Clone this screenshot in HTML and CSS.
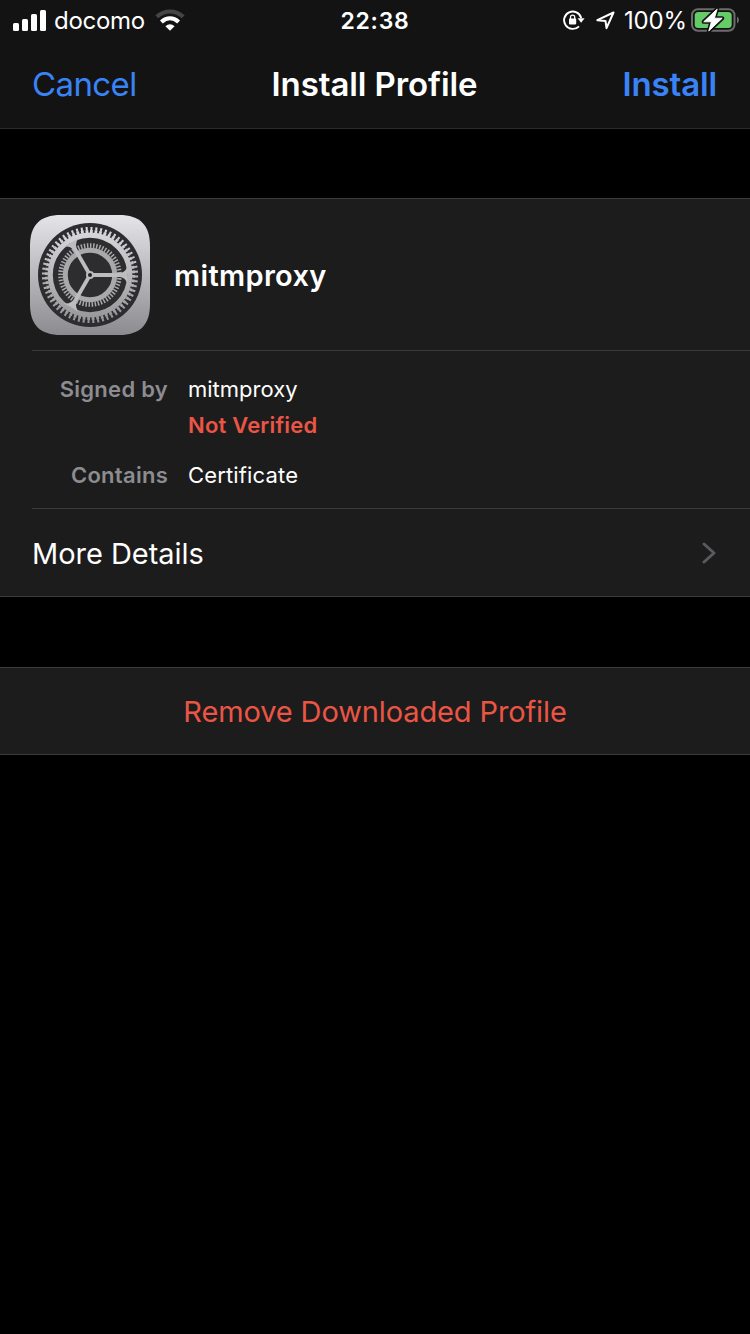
FILE: index.html
```
<!DOCTYPE html>
<html lang="en">
<head>
<meta charset="utf-8">
<title>Install Profile</title>
<link rel="stylesheet" href="styles.css">
</head>
<body>
<header class="top">
  <div class="status">
    <div class="status-left">
      <svg class="signal" width="33" height="21" viewBox="0 0 33 21" fill="#fff"><rect x="0" y="13" width="6" height="8" rx="1.5"/><rect x="9" y="9" width="6" height="12" rx="1.5"/><rect x="18" y="4" width="6" height="17" rx="1.5"/><rect x="27" y="0" width="6" height="21" rx="1.5"/></svg>
      <span class="carrier">docomo</span>
      <svg class="wifi" width="30" height="22" viewBox="0 0 30 22" fill="none"><path d="M1.8 7.8C9.5.7 20.5.7 28.2 7.8" stroke="#454545" stroke-width="4.2"/><path d="M6.4 13C11.7 8.2 18.3 8.2 23.6 13" stroke="#fff" stroke-width="4.2"/><path d="M10.4 17.2Q15 13.2 19.6 17.2L15 21.8Z" fill="#fff"/></svg>
    </div>
    <span class="clock">22:38</span>
    <div class="status-right">
      <svg class="lock" width="22" height="20" viewBox="0 0 22 20" fill="none"><path d="M16 16.3A8.7 8.7 0 1 1 18.2 8" stroke="#fff" stroke-width="1.9"/><path d="M14.6 8.3H21.6L18.1 12.8Z" fill="#fff"/><rect x="6" y="8.6" width="7.2" height="5.8" rx=".8" fill="#fff"/><path d="M7.5 9V7.3a2.1 2.1 0 0 1 4.2 0V9" stroke="#fff" stroke-width="1.3"/></svg>
      <svg class="location" width="19" height="19" viewBox="0 0 19 19" fill="none"><path d="M1.3 9.2L17.5 1.5L10.5 17.2L9.5 9.9Z" stroke="#fff" stroke-width="2" stroke-linejoin="round"/></svg>
      <span class="percent">100%</span>
      <svg class="battery" width="48" height="24" viewBox="0 0 48 24"><rect x="1" y="1.2" width="42.5" height="21.6" rx="6" fill="none" stroke="#6c6c6e" stroke-width="2"/><path d="M46 8.5q2 1.2 2 3.5t-2 3.5z" fill="#6c6c6e"/><rect x="3.7" y="4" width="37" height="16" rx="3.5" fill="#65cb67"/><path d="M26.2 1L12.7 13.8H20.4L17.8 23L31.2 10.2H23.4Z" fill="#fff" stroke="#121212" stroke-width="4" stroke-linejoin="round"/><path d="M26.2 1L12.7 13.8H20.4L17.8 23L31.2 10.2H23.4Z" fill="#fff" stroke="#fff" stroke-width=".9"/></svg>
    </div>
  </div>
  <nav class="nav">
    <span class="cancel">Cancel</span>
    <h1 class="title">Install Profile</h1>
    <span class="install">Install</span>
  </nav>
</header>
<main>
  <section class="group">
    <div class="profile">
      <svg class="app-icon" width="120" height="120" viewBox="0 0 120 120" fill="none">
        <defs>
          <linearGradient id="tile" x1="0" y1="0" x2="0" y2="1"><stop offset="0" stop-color="#e4e4e9"/><stop offset="1" stop-color="#8c8c90"/></linearGradient>
          <linearGradient id="metal" gradientUnits="userSpaceOnUse" x1="0" y1="8" x2="0" y2="112"><stop offset="0" stop-color="#dedee2"/><stop offset="1" stop-color="#929295"/></linearGradient>
        </defs>
        <path d="M31 0H89C110 0 120 10 120 31V89C120 110 110 120 89 120H31C10 120 0 110 0 89V31C0 10 10 0 31 0Z" fill="url(#tile)"/>
        <circle cx="60" cy="60" r="52" fill="#2d2d2f"/>
        <g stroke="url(#metal)">
          <circle cx="60" cy="60" r="39.8" stroke-width="5.2"/>
          <circle cx="60" cy="60" r="43.6" stroke-width="3" pathLength="60" stroke-dasharray=".62 .38"/>
          <circle cx="60" cy="60" r="46.5" stroke-width="3.2" pathLength="60" stroke-dasharray=".42 .58" stroke-dashoffset="-.1"/>
        </g>
        <g stroke="#a9a9ac">
          <circle cx="60" cy="60" r="24.7" stroke-width="5"/>
          <circle cx="60" cy="60" r="29.4" stroke-width="4.8" pathLength="60" stroke-dasharray=".48 .52"/>
        </g>
        <g fill="#bdbdc0">
          <path d="M60 58.1H90Q96 57 97.4 51V69Q96 63 90 61.9H60Z"/>
          <path d="M60 58.1H90Q96 57 97.4 51V69Q96 63 90 61.9H60Z" transform="rotate(120 60 60)"/>
          <path d="M60 58.1H90Q96 57 97.4 51V69Q96 63 90 61.9H60Z" transform="rotate(240 60 60)"/>
        </g>
        <circle cx="60" cy="60" r="4" fill="#bdbdc0"/>
        <circle cx="60" cy="60" r="2" fill="#242426"/>
      </svg>
      <h2 class="profile-name">mitmproxy</h2>
    </div>
    <dl class="facts">
      <dt>Signed by</dt>
      <dd><span class="signer">mitmproxy</span><br><span class="unverified">Not Verified</span></dd>
      <dt>Contains</dt>
      <dd><span class="kind">Certificate</span></dd>
    </dl>
    <div class="more">
      <span class="more-label">More Details</span>
      <svg class="chevron" width="14" height="22" viewBox="0 0 14 22" fill="none"><path d="M2 2L12 11L2 20" stroke="#5a5a5e" stroke-width="3" stroke-linecap="round" stroke-linejoin="round"/></svg>
    </div>
  </section>
  <section class="group remove"><span class="remove-label">Remove Downloaded Profile</span></section>
</main>
</body>
</html>
```
FILE: styles.css
```
* { box-sizing: border-box; }
body {
  margin: 0;
  min-height: 1334px;
  background: #000;
  color: #fff;
  font-family: Inter, "Liberation Sans", sans-serif;
}
h1, h2, dl, dd { margin: 0; }
span, h1, h2 { white-space: nowrap; }
.top { height: 129px; background: #131313; border-bottom: 1px solid #2a2a2b; }
.status {
  height: 40px;
  display: grid;
  grid-template-columns: 1fr auto 1fr;
  align-items: center;
  padding: 0 11px 0 13px;
  font-size: 24px;
  line-height: 38px;
}
.status-left, .status-right { display: flex; align-items: center; }
.status-right { justify-content: flex-end; }
.carrier { width: 101px; padding: 2px 0 0 8px; letter-spacing: -.3px; }
.wifi { margin-left: 8px; }
.clock { padding-top: 2px; font-weight: 600; font-size: 23px; letter-spacing: .7px; margin-right: 2px; }
.location { margin-left: 11px; }
.percent { width: 62px; margin: 0 5px 0 9px; padding-top: 2px; letter-spacing: -.2px; }
.nav {
  height: 88px;
  display: grid;
  grid-template-columns: 1fr auto 1fr;
  align-items: center;
  padding: 0 33px 0 32px;
  font-size: 33px;
  line-height: 88px;
}
.cancel, .install { color: #3a83f7; }
.cancel { letter-spacing: -.6px; }
.install { text-align: right; font-weight: 600; letter-spacing: -.15px; }
.title { font-size: 33px; font-weight: 600; letter-spacing: -.1px; }
.group {
  margin-top: 69px;
  background: #1c1c1c;
  border-top: 1px solid #3b3b3d;
  border-bottom: 1px solid #3b3b3d;
}
.profile {
  height: 152px;
  margin-left: 32px;
  display: flex;
  align-items: center;
  border-bottom: 1px solid #3b3b3d;
}
.app-icon { margin-left: -2px; }
.profile-name { margin-left: 24px; padding-top: 2px; font-size: 29px; font-weight: 600; letter-spacing: .35px; line-height: 40px; }
.facts {
  height: 158px;
  margin-left: 32px;
  padding-top: 20px;
  display: grid;
  grid-template-columns: 136px 1fr;
  grid-template-rows: 86px 36px;
  column-gap: 20px;
  border-bottom: 1px solid #3b3b3d;
  font-size: 22px;
  line-height: 36px;
}
.facts dt { color: #8c8c91; font-weight: 600; letter-spacing: .27px; text-align: right; }
.unverified { color: #eb5545; font-weight: 600; letter-spacing: .2px; }
.kind { letter-spacing: .15px; }
.more {
  height: 87px;
  padding: 0 34px 0 32px;
  display: flex;
  align-items: center;
  justify-content: space-between;
  font-size: 29px;
}
.more-label { padding-top: 2px; letter-spacing: -.03px; }
.remove {
  height: 88px;
  margin-top: 70px;
  display: flex;
  align-items: center;
  justify-content: center;
  color: #eb5545;
  font-size: 29px;
  letter-spacing: -.12px;
}
```
